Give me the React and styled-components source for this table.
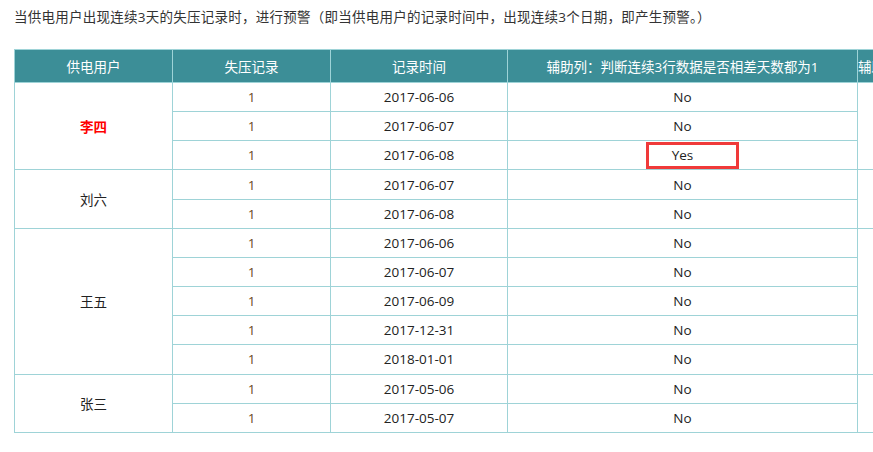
import React from 'react'
import styled, { createGlobalStyle } from 'styled-components';

const GlobalStyle = createGlobalStyle`
  html, body {
    margin: 0;
    padding: 0;
    background: #fff;
    overflow: hidden;
  }
  body {
    font-family: "Open Sans", "Noto Sans CJK SC", sans-serif;
    color: #222;
  }
`;

const Page = styled.div`
  width: 873px;
  height: 452px;
  overflow: hidden;
  padding: 7px 0 0 14px;
  box-sizing: border-box;
`;

const Title = styled.p`
  margin: 0 0 22px;
  font-size: 13.5px;
  letter-spacing: 0.25px;
  line-height: 20px;
  color: #333;
  white-space: nowrap;
`;

const Table = styled.table`
  border-collapse: collapse;
  table-layout: fixed;
  width: 964px;
  font-size: 13.5px;
`;

const Th = styled.th`
  background: #3c8e97;
  color: #fff;
  font-weight: 400;
  height: 32px;
  padding: 0;
  border: 1px solid #9ed3d7;
  text-align: ${p => (p.$left ? 'left' : 'center')};
  white-space: nowrap;
  overflow: hidden;
`;

const Td = styled.td`
  height: 28.17px;
  padding: 0;
  border: 1px solid #9ed3d7;
  text-align: center;
  color: ${p => p.$color || '#222'};
  font-weight: ${p => (p.$bold ? 700 : 400)};
  position: relative;
`;

const Mark = styled.span`
  position: absolute;
  left: 138px;
  top: 1px;
  width: 93px;
  height: 27px;
  border: 3px solid #f03a3a;
  box-sizing: border-box;
`;

const groups = [
  { name: '李四', hot: true, rows: [['2017-06-06', 'No'], ['2017-06-07', 'No'], ['2017-06-08', 'Yes']] },
  { name: '刘六', rows: [['2017-06-07', 'No'], ['2017-06-08', 'No']] },
  {
    name: '王五',
    rows: [['2017-06-06', 'No'], ['2017-06-07', 'No'], ['2017-06-09', 'No'], ['2017-12-31', 'No'], ['2018-01-01', 'No']],
  },
  { name: '张三', rows: [['2017-05-06', 'No'], ['2017-05-07', 'No']] },
];

const App = () => {
  return (
    <Page>
      <GlobalStyle />
      <Title>当供电用户出现连续3天的失压记录时，进行预警（即当供电用户的记录时间中，出现连续3个日期，即产生预警。）</Title>
      <Table>
        <colgroup>
          <col style={{ width: 158 }} />
          <col style={{ width: 158 }} />
          <col style={{ width: 177 }} />
          <col style={{ width: 350 }} />
          <col style={{ width: 121 }} />
        </colgroup>
        <thead>
          <tr>
            <Th>供电用户</Th>
            <Th>失压记录</Th>
            <Th>记录时间</Th>
            <Th>辅助列：判断连续3行数据是否相差天数都为1</Th>
            <Th $left>辅助列：预警</Th>
          </tr>
        </thead>
        <tbody>
          {groups.map(g =>
            g.rows.map((r, i) => (
              <tr key={g.name + i}>
                {i === 0 && (
                  <Td rowSpan={g.rows.length} $color={g.hot ? '#f00' : undefined} $bold={g.hot}>
                    {g.name}
                  </Td>
                )}
                <Td $color="#6b4a1e">1</Td>
                <Td>{r[0]}</Td>
                <Td>
                  {r[1]}
                  {r[1] === 'Yes' && <Mark />}
                </Td>
                {i === 0 && <Td rowSpan={g.rows.length} />}
              </tr>
            ))
          )}
        </tbody>
      </Table>
    </Page>
  )
}

export default App
